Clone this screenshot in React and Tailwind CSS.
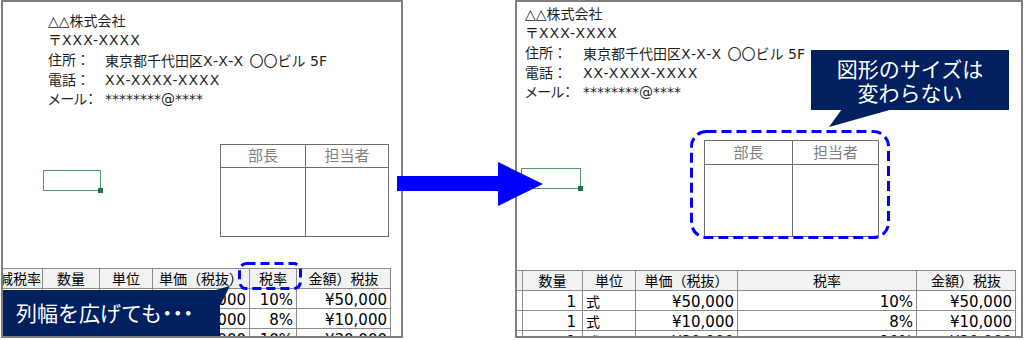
function Address({ labelW }) {
  return (
    <>
      <div>△△株式会社</div>
      <div>〒<span className="tracking-[1px]">XXX-XXXX</span></div>
      <div className="flex">
        <span className={labelW}>住所：</span>
        <span className="whitespace-nowrap">東京都千代田区<span className="tracking-[1px]">X-X-X </span><span className="[font-family:'Noto_Sans_CJK_JP',sans-serif]">〇〇</span>ビル 5F</span>
      </div>
      <div className="flex">
        <span className={labelW}>電話：</span>
        <span className="tracking-[1px]">XX-XXXX-XXXX</span>
      </div>
      <div className="flex">
        <span className={labelW + " [font-feature-settings:'palt']"}>メール：</span>
        <span>********@****</span>
      </div>
    </>
  );
}

function Stamp({ w, h, hh, col }) {
  return (
    <div className={"border border-[#6e6e6e] flex flex-col " + w + " " + h}>
      <div className={"flex border-b border-[#6e6e6e] text-[15px] text-[#7f7f7f] " + hh}>
        <div className={"border-r border-[#6e6e6e] flex items-center justify-center " + col}>部長</div>
        <div className="flex-1 flex items-center justify-center">担当者</div>
      </div>
      <div className="flex-1 flex">
        <div className={"border-r border-[#6e6e6e] " + col}></div>
        <div className="flex-1"></div>
      </div>
    </div>
  );
}

function DataTable({ grid, width, first, qtyPad }) {
  const rows = [["¥50,000", "10%", "¥50,000"], ["¥10,000", "8%", "¥10,000"], ["¥30,000", "10%", "¥30,000"]];
  const c = "border-r border-[#8c8c8c] flex items-center";
  return (
    <div className={"border-t border-[#8c8c8c] text-black " + width}>
      <div className={"grid h-[20px] bg-[#f2f2f2] border-b border-[#8c8c8c] text-[14px] " + grid}>
        <div className={c + " justify-end pr-[1px] overflow-hidden whitespace-nowrap"}>{first}</div>
        <div className={c + " justify-center"}>数量</div>
        <div className={c + " justify-center"}>単位</div>
        <div className={c + " justify-center whitespace-nowrap"}>単価（税抜）</div>
        <div className={c + " justify-center"}>税率</div>
        <div className={c + " justify-center whitespace-nowrap"}>金額）税抜</div>
      </div>
      {rows.map((r, i) => (
        <div key={i} className={"grid h-[20px] border-b border-[#8c8c8c] text-[15px] " + grid}>
          <div className="border-r border-[#8c8c8c]"></div>
          <div className={c + " justify-end " + qtyPad}>1</div>
          <div className={c + " pl-[3px] text-[14px]"}>式</div>
          <div className={c + " justify-end pr-[3px]"}>{r[0]}</div>
          <div className={c + " justify-end pr-[3px]"}>{r[1]}</div>
          <div className={c + " justify-end pr-[3px]"}>{r[2]}</div>
        </div>
      ))}
    </div>
  );
}

export default function App() {
  return (
    <div className="relative w-[1024px] h-[340px] overflow-hidden bg-white text-[#1f1f1f] [font-family:'DejaVu_Sans','Noto_Sans_CJK_JP',sans-serif]">
      <div className="flex items-start pl-[1px] gap-[112px]">
        {/* LEFT PANEL */}
        <div className="w-[402px] h-[338px] border-2 border-[#7f7f7f] overflow-hidden flex flex-col">
          <div className="pt-[10px] pl-[45px] text-[14px] leading-[19.25px]">
            <Address labelW="w-[57px]" />
          </div>
          <div className="mt-[35px] flex items-start">
            <div className="relative ml-[40px] mt-[26px] w-[58px] h-[21px] border-[1.5px] border-[#4f9a6e]">
              <div className="absolute right-[-3px] bottom-[-3px] w-[5px] h-[5px] bg-[#217346]"></div>
            </div>
            <div className="ml-[119px]">
              <Stamp w="w-[169px]" h="h-[93px]" hh="h-[23px]" col="w-[85px]" />
            </div>
          </div>
          <div className="mt-[31px]">
            <DataTable grid="grid-cols-[40px_57px_53px_97px_47px_94px]" width="w-[388px]" first="減税率" qtyPad="pr-[5px]" />
          </div>
        </div>

        {/* RIGHT PANEL */}
        <div className="w-[508px] h-[338px] border-2 border-[#7f7f7f] overflow-hidden flex flex-col">
          <div className="pt-[3px] pl-[8px] text-[14px] leading-[19.25px]">
            <Address labelW="w-[58px]" />
          </div>
          <div className="mt-[38px] flex items-start">
            <div className="relative ml-[4px] mt-[28px] w-[60px] h-[21px] border-[1.5px] border-[#4f9a6e]">
              <div className="absolute right-[-3px] bottom-[-3px] w-[5px] h-[5px] bg-[#217346]"></div>
            </div>
            <div className="ml-[123px]">
              <Stamp w="w-[175px]" h="h-[97px]" hh="h-[24px]" col="w-[88px]" />
            </div>
          </div>
          <div className="mt-[33px]">
            <DataTable grid="grid-cols-[6px_60px_53px_102px_179px_99px]" width="w-[499px]" first="" qtyPad="pr-[6px]" />
          </div>
        </div>
      </div>

      {/* Callouts */}
      <div className="absolute left-[3px] top-[290px] w-[217px] h-[46px] bg-[#002060] text-white text-[21px] flex items-center pl-[13px] whitespace-nowrap [font-family:'Noto_Sans_CJK_JP',sans-serif]">
        <span>列幅を広げても</span><span className="[font-feature-settings:'palt']">・・・</span>
      </div>
      <div className="absolute left-[811px] top-[50px] w-[198px] h-[60px] bg-[#002060] text-white text-[21px] leading-[24px] flex flex-col items-center justify-center [font-family:'Noto_Sans_CJK_JP',sans-serif]">
        <div>図形のサイズは</div>
        <div>変わらない</div>
      </div>

      <svg className="absolute inset-0 pointer-events-none" width="1024" height="340" viewBox="0 0 1024 340">
        <polygon points="397,176 498,176 498,162 543,184 498,206 498,191 397,191" fill="#0000ff" />
        <rect x="239.5" y="263.5" width="61" height="25" rx="7" fill="none" stroke="#0000ff" strokeWidth="3" strokeDasharray="9 5" />
        <rect x="691.5" y="131.5" width="197" height="106" rx="15" fill="none" stroke="#0000ff" strokeWidth="3" strokeDasharray="10 5" />
        <polygon points="842,109 893,109 829,127" fill="#002060" />
        <polygon points="212,291 230,286 221,304" fill="#002060" />
      </svg>
    </div>
  );
}
